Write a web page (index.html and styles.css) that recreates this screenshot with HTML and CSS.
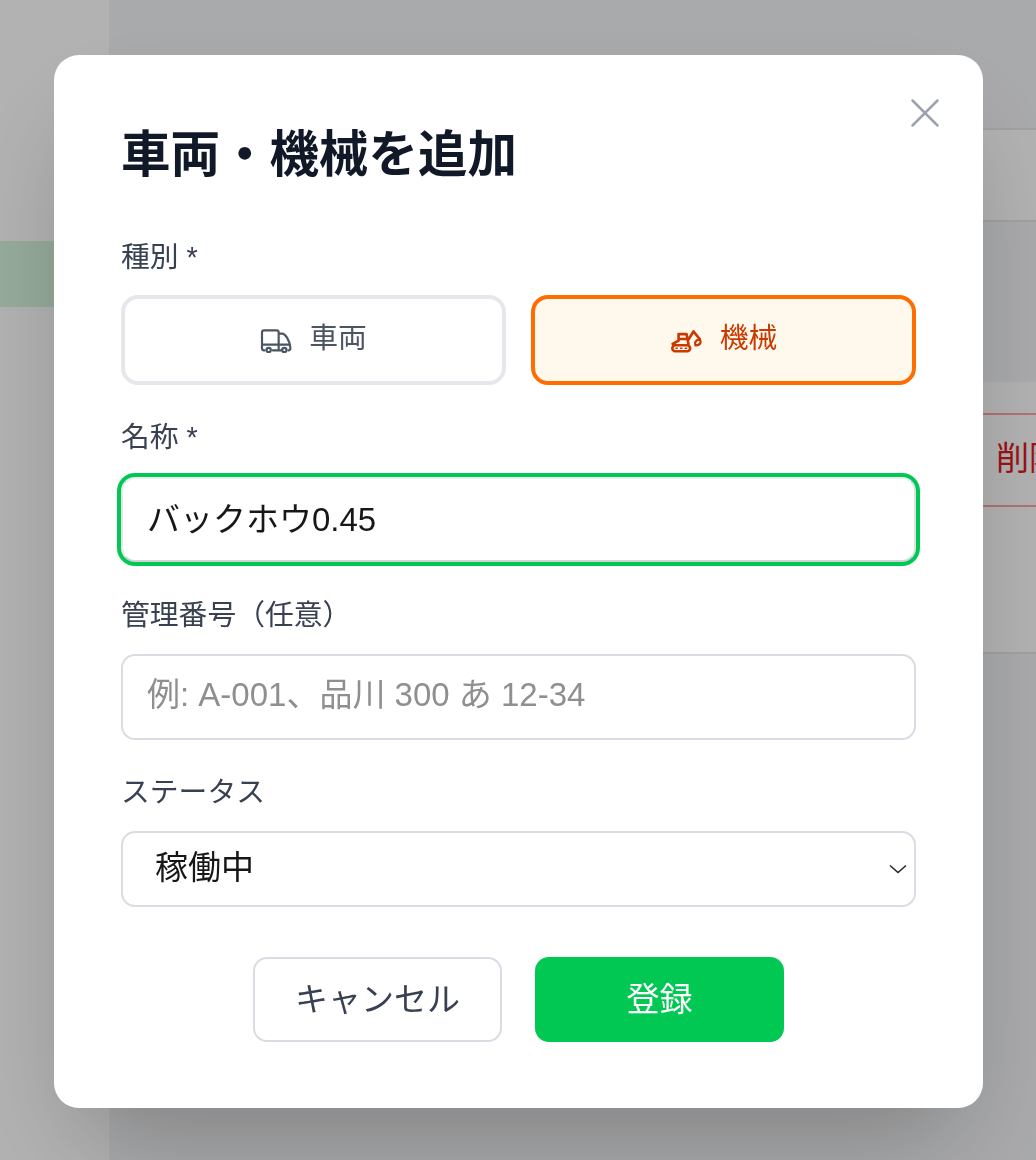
FILE: index.html
```html
<!DOCTYPE html>
<html lang="ja">
<head>
<meta charset="utf-8">
<title>車両・機械を追加</title>
<link rel="stylesheet" href="styles.css">
</head>
<body>
<div class="page">
  <aside class="sidebar"><div class="nav-active"></div></aside>
  <main class="main">
    <div class="band band-top"></div>
    <div class="band band-light"></div>
    <div class="band band-mid"></div>
    <div class="band band-row">
      <div class="danger"><span class="danger-text">削除</span></div>
    </div>
    <div class="band band-bottom"></div>
  </main>
</div>
<div class="overlay">
  <form class="modal">
    <button type="button" class="close" aria-label="閉じる">
      <svg viewBox="0 0 32 32" width="32" height="32"><path d="M3.5 3.5 28.5 28.5M28.5 3.5 3.5 28.5"/></svg>
    </button>
    <h2 class="title">車両・機械を追加</h2>
    <label class="label label-type">種別 *</label>
    <div class="types">
      <button type="button" class="type">
        <svg class="type-icon" viewBox="62 58 96 72" width="32" height="24"><path d="M76 122h-2a6 6 0 0 1-6-6V68a6 6 0 0 1 6-6h38a6 6 0 0 1 6 6v54M100 122h26M68 105h84M118 72h10c10 0 24 22 25 42a6 6 0 0 1-5 8h-1"/><circle cx="88" cy="121" r="6.5"/><circle cx="135" cy="121" r="6.5"/></svg>
        <span class="type-text">車両</span>
      </button>
      <button type="button" class="type type-on">
        <svg class="type-icon" viewBox="60 55 100 75" width="33" height="25"><path d="M76 104h36a9 9 0 0 1 0 18H76a9 9 0 0 1 0-18zM68 100l18-10V70h24l6 30M86 85h26M115 88 131 62l19 23"/><path class="bucket" d="M150 85c6 12 0 20-13 19-3-8 0-16 13-19z"/><path class="dots" d="M78 113h4M92 113h4M106 113h4"/></svg>
        <span class="type-text">機械</span>
      </button>
    </div>
    <label class="label label-name" for="name">名称 *</label>
    <input class="field field-focus" id="name" type="text" value="バックホウ0.45">
    <label class="label label-num" for="num">管理番号（任意）</label>
    <input class="field field-num" id="num" type="text" placeholder="例: A-001、品川 300 あ 12-34">
    <label class="label label-status" for="status">ステータス</label>
    <div class="select-wrap">
      <select class="select" id="status"><option>稼働中</option><option>休止中</option></select>
      <svg class="chevron" viewBox="0 0 18 10" width="18" height="10"><path d="M1 1.5 9 8.5 17 1.5"/></svg>
    </div>
    <div class="actions">
      <button type="button" class="btn btn-cancel">キャンセル</button>
      <button type="button" class="btn btn-submit">登録</button>
    </div>
  </form>
</div>
</body>
</html>
```
FILE: styles.css
```css
* { box-sizing: border-box; }
html, body { margin: 0; height: 1160px; overflow: hidden; }
body {
  font-family: "Liberation Sans", "Noto Sans CJK JP", sans-serif;
  background: #fff;
  color: #374151;
}
.page { display: flex; height: 1160px; }
.sidebar {
  flex: none;
  width: 111px;
  padding-top: 241px;
  background: #fff;
  border-right: 2px solid #f3f4f6;
}
.nav-active { height: 66px; background: #d6f5df; }
.main { flex: 1; min-width: 0; background: #f3f4f6; display: flex; flex-direction: column; }
.band-top { height: 128px; }
.band-light { height: 94px; background: #fff; border-top: 2px solid #e5e7eb; border-bottom: 2px solid #e5e7eb; }
.band-mid { height: 158px; }
.band-row { height: 274px; background: #fff; border-top: 2px solid #f3f4f6; border-bottom: 2px solid #e5e7eb; padding-top: 31px; }
.danger {
  height: 94px;
  margin-left: 860px;
  border-top: 2px solid #fca5a5;
  border-bottom: 2px solid #fca5a5;
  padding: 22px 0 0 25px;
  overflow: hidden;
  white-space: nowrap;
}
.danger-text { color: #dc1a20; font-size: 33px; line-height: 44px; }
.overlay {
  position: fixed;
  inset: 0;
  background: rgba(0, 0, 0, 0.3);
  padding: 55px 53px 52px 54px;
}
.modal {
  position: relative;
  height: 1053px;
  background: #fff;
  border-radius: 25px;
  padding: 67px 67px 0 67px;
  box-shadow: 0 52px 103px -25px rgba(0, 0, 0, 0.25);
}
.close {
  position: absolute;
  top: 42px;
  right: 42px;
  width: 32px;
  height: 32px;
  padding: 0;
  border: 0;
  background: none;
}
.close svg { display: block; fill: none; stroke: #9ca3af; stroke-width: 2.5; stroke-linecap: round; }
.title {
  margin: 0;
  font-size: 49.5px;
  line-height: 66px;
  font-weight: 700;
  color: #111827;
}
.label {
  display: block;
  font-size: 28.8px;
  line-height: 41px;
  color: #374151;
}
.label-type { margin-top: 49px; }
.types { display: flex; gap: 25px; margin-top: 17px; }
.type {
  flex: 1;
  height: 90px;
  display: flex;
  align-items: center;
  justify-content: center;
  gap: 17px;
  border: 4px solid #e5e7eb;
  border-radius: 17px;
  background: #fff;
  color: #4b5563;
  font: inherit;
  font-size: 28.8px;
  line-height: 41px;
}
.type-text { padding-bottom: 4px; }
.type-icon { fill: none; stroke: currentColor; stroke-width: 6.5; stroke-linecap: round; stroke-linejoin: round; margin-top: 2px; }
.type-on { border-color: #ff6d00; background: #fff8ed; color: #c93a00; }
.type-on .type-icon { stroke-width: 8; }
.type-on .bucket { fill: none; stroke-width: 7; }
.type-on .dots { stroke-width: 5; }
.label-name { margin-top: 32px; }
.field {
  display: block;
  width: 100%;
  border: 2px solid #d9dce2;
  border-radius: 14px;
  background: #fff;
  font: inherit;
  font-size: 33px;
  color: #1f2937;
  outline: 0;
  padding: 0 24px 5px;
}
.field::placeholder { color: #8f8f8f; opacity: 1; }
.field-focus { height: 85px; margin-top: 19px; box-shadow: 0 0 0 4px #00c853; color: #171717; border-color: #eceef1 #dfe1e5 #cfd2d7 #e6e8eb; }
.label-num { margin-top: 33px; }
.field-num { height: 86px; margin-top: 18px; }
.label-status { margin-top: 32px; }
.select-wrap { position: relative; margin-top: 18px; }
.select {
  display: block;
  width: 100%;
  height: 76px;
  appearance: none;
  border: 2px solid #d9dce2;
  border-radius: 14px;
  background: #fff;
  font: inherit;
  font-size: 33px;
  color: #171717;
  padding: 0 32px 3px;
}
.chevron { position: absolute; top: 33px; right: 9px; fill: none; stroke: #222; stroke-width: 1.5; }
.actions { display: flex; justify-content: center; gap: 33px; margin-top: 50px; }
.btn {
  width: 249px;
  height: 85px;
  border-radius: 14px;
  font: inherit;
  font-size: 33px;
  padding: 0 0 5px;
}
.btn-cancel { border: 2px solid #d9dce2; background: #fff; color: #374151; }
.btn-submit { border: 0; background: #00c853; color: #fff; }
```
